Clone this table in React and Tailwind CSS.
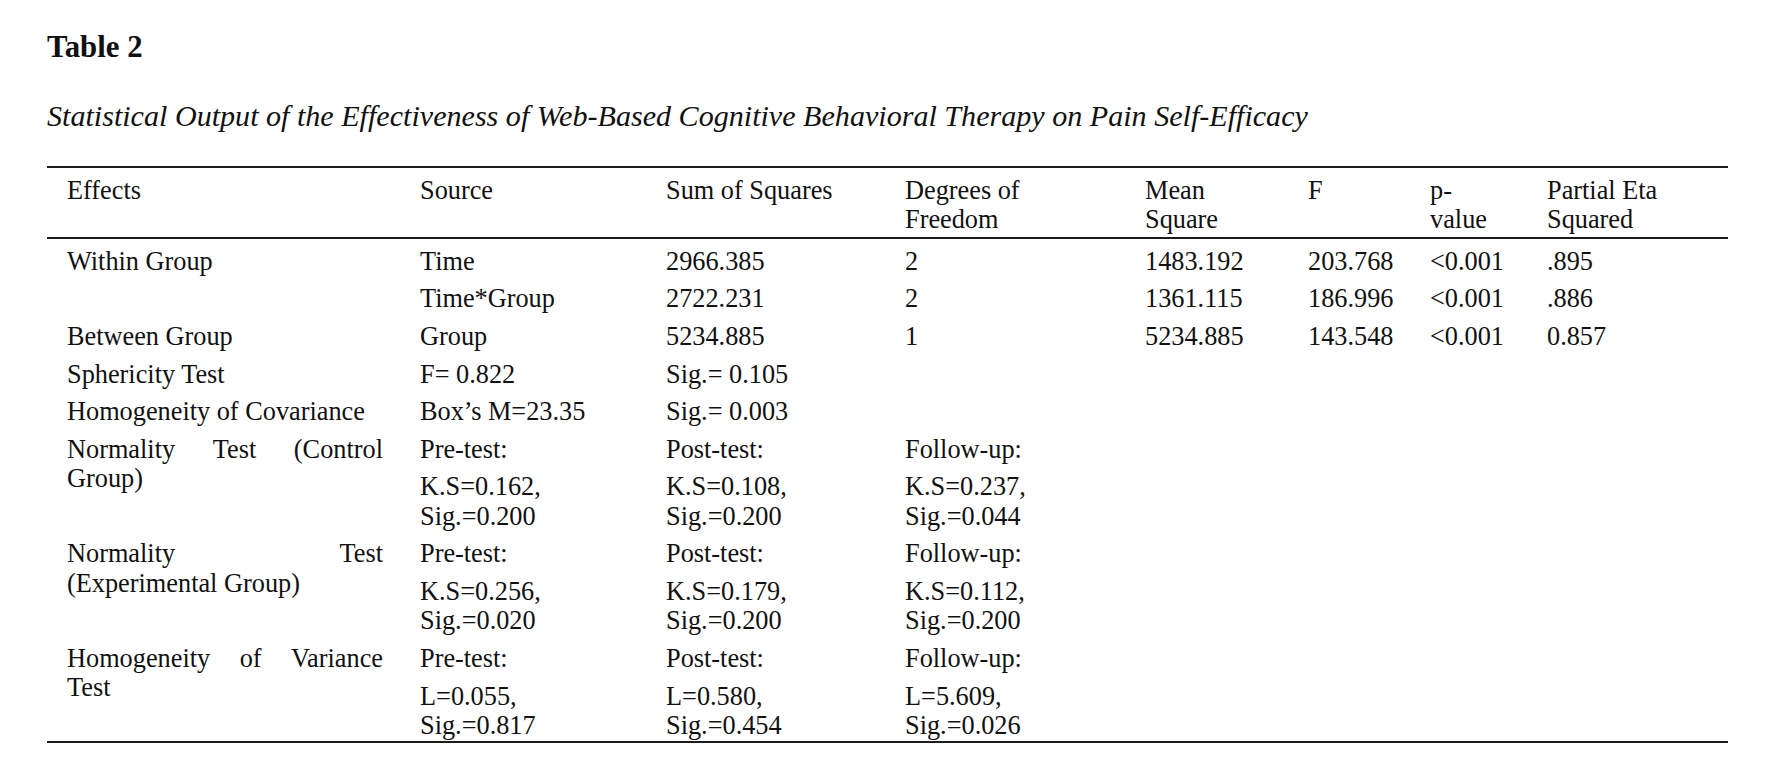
import React from "react";

const COLS = "grid grid-cols-[353px_246px_239px_240px_163px_122px_117px_181px] pl-[20px]";

function Cell({ children }) {
  return <div className="pt-[8.2px]">{children}</div>;
}

function Para({ lines }) {
  return (
    <div className="flex flex-col gap-[8.2px]">
      {lines.map((p, i) => (
        <div key={i}>
          {p.map((l, j) => (
            <div key={j} className="whitespace-nowrap">{l}</div>
          ))}
        </div>
      ))}
    </div>
  );
}

function Justified({ words }) {
  return (
    <div className="flex justify-between w-[316px]">
      {words.map((w, i) => (
        <span key={i}>{w}</span>
      ))}
    </div>
  );
}

const simpleRows = [
  ["Within Group", "Time", "2966.385", "2", "1483.192", "203.768", "<0.001", ".895"],
  ["", "Time*Group", "2722.231", "2", "1361.115", "186.996", "<0.001", ".886"],
  ["Between Group", "Group", "5234.885", "1", "5234.885", "143.548", "<0.001", "0.857"],
  ["Sphericity Test", "F= 0.822", "Sig.= 0.105", "", "", "", "", ""],
  ["Homogeneity of Covariance", "Box\u2019s M=23.35", "Sig.= 0.003", "", "", "", "", ""],
];

const testRows = [
  {
    first: [<Justified key="a" words={["Normality", "Test", "(Control"]} />, <div key="b">Group)</div>],
    cells: [
      [["Pre-test:"], ["K.S=0.162,", "Sig.=0.200"]],
      [["Post-test:"], ["K.S=0.108,", "Sig.=0.200"]],
      [["Follow-up:"], ["K.S=0.237,", "Sig.=0.044"]],
    ],
  },
  {
    first: [<Justified key="a" words={["Normality", "Test"]} />, <div key="b">(Experimental Group)</div>],
    cells: [
      [["Pre-test:"], ["K.S=0.256,", "Sig.=0.020"]],
      [["Post-test:"], ["K.S=0.179,", "Sig.=0.200"]],
      [["Follow-up:"], ["K.S=0.112,", "Sig.=0.200"]],
    ],
  },
  {
    first: [<Justified key="a" words={["Homogeneity", "of", "Variance"]} />, <div key="b">Test</div>],
    cells: [
      [["Pre-test:"], ["L=0.055,", "Sig.=0.817"]],
      [["Post-test:"], ["L=0.580,", "Sig.=0.454"]],
      [["Follow-up:"], ["L=5.609,", "Sig.=0.026"]],
    ],
  },
];

export default function App() {
  return (
    <div className="w-[1771px] h-[766px] bg-white text-[#111] font-['Liberation_Serif','Times_New_Roman',serif] pl-[47px] pt-[30px]">
      <div className="text-[30.8px] leading-[34px] font-bold">Table 2</div>
      <div className="mt-[35px] text-[30.1px] leading-[34px] italic">
        Statistical Output of the Effectiveness of Web-Based Cognitive Behavioral Therapy on Pain Self-Efficacy
      </div>
      <div className="mt-[33.4px] w-[1681px] text-[26.3px] leading-[29.4px]">
        <div className={`${COLS} border-t-2 border-b-2 border-[#1c1c1c] pt-[7.5px] pb-[2px]`}>
          <div>Effects</div>
          <div>Source</div>
          <div>Sum of Squares</div>
          <div>
            <div>Degrees of</div>
            <div>Freedom</div>
          </div>
          <div>
            <div>Mean</div>
            <div>Square</div>
          </div>
          <div>F</div>
          <div>
            <div>p-</div>
            <div>value</div>
          </div>
          <div>
            <div>Partial Eta</div>
            <div>Squared</div>
          </div>
        </div>
        <div className={`${COLS} border-b-2 border-[#1c1c1c] pb-[0.5px]`}>
          {simpleRows.map((r, i) =>
            r.map((c, j) => (
              <Cell key={`${i}-${j}`}>
                <div className="whitespace-nowrap">{c}</div>
              </Cell>
            ))
          )}
          {testRows.map((r, i) => (
            <React.Fragment key={`t${i}`}>
              <Cell>{r.first}</Cell>
              {r.cells.map((c, j) => (
                <Cell key={j}>
                  <Para lines={c} />
                </Cell>
              ))}
              <Cell />
              <Cell />
              <Cell />
              <Cell />
            </React.Fragment>
          ))}
        </div>
      </div>
    </div>
  );
}
